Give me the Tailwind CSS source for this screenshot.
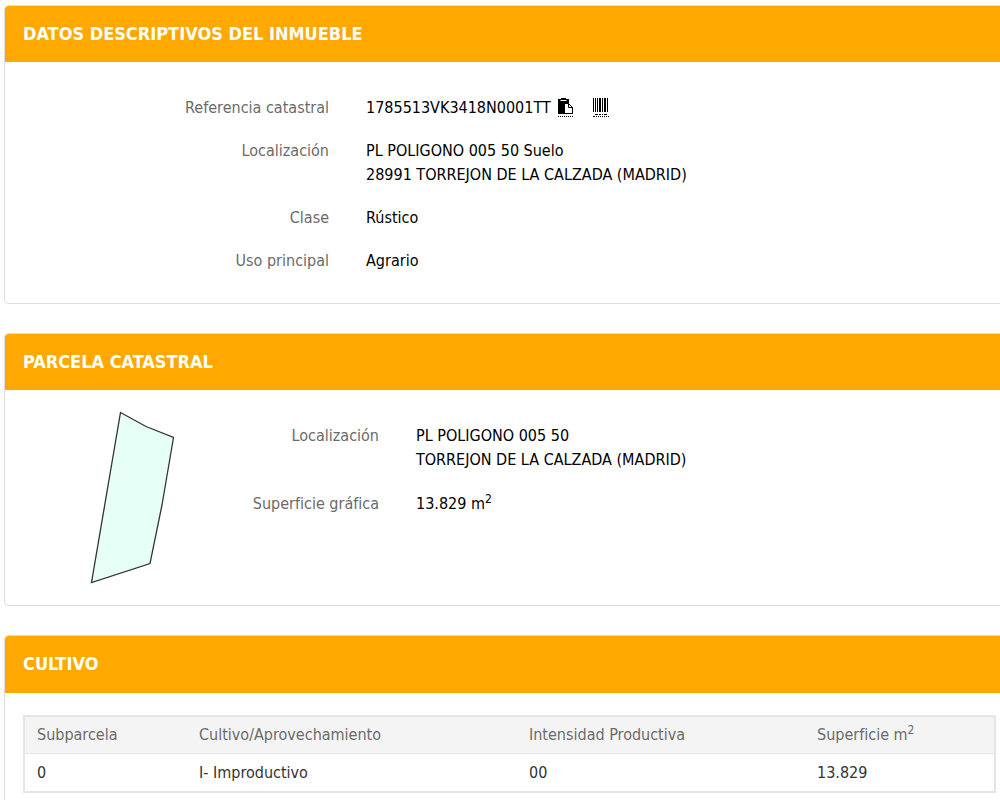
<!DOCTYPE html>
<html lang="es">
<head>
  <meta charset="UTF-8">
  <meta name="viewport" content="width=device-width, initial-scale=1.0">
  <title>Datos descriptivos del inmueble</title>
  <script src="https://cdn.jsdelivr.net/npm/@tailwindcss/browser@4"></script>
</head>
<body class="bg-white font-['DejaVu_Sans_Condensed','Noto_Sans',sans-serif] text-base leading-6 text-black">
  <main class="flex flex-col gap-[29px] pt-[5px] pl-1">

    <!-- Datos del inmueble -->
    <section class="border border-r-0 border-[#dddddd] rounded-l-[5px] overflow-hidden">
      <h2 class="bg-[#ffa800] text-white text-lg leading-6 font-bold px-[18px] py-4">DATOS DESCRIPTIVOS DEL INMUEBLE</h2>
      <dl class="grid grid-cols-[324px_1fr] gap-x-[37px] gap-y-[19px] pt-[34px] pb-[30px]">
        <dt class="text-right text-[#6b6b6b]">Referencia catastral</dt>
        <dd class="flex">
          <span>1785513VK3418N0001TT</span>
          <button type="button" aria-label="Copiar" class="ml-[7px] mt-px h-5 border-b border-dotted border-black">
            <svg class="w-[15px] h-[18px]" viewBox="0 0 15 18">
              <path d="M0 1h3V0h5v1h3v4H7v11H0z" fill="#000"/>
              <path d="M2.500 2.500h6" stroke="#fff"/>
              <path d="M6.500 5.500h4l4 4v6h-8z" fill="#fff" stroke="#000"/>
              <path d="M10.500 5.500v4h4" fill="none" stroke="#000"/>
            </svg>
          </button>
          <button type="button" aria-label="Código de barras" class="ml-5 mt-px h-5 border-b border-dotted border-black">
            <svg class="w-4 h-[18px]" viewBox="0 0 16 18">
              <path d="M0 0h1v14H0zM2 0h1v14H2zM4 0h1v14H4zM6 0h2v14H6zM9 0h1v14H9zM11 0h2v14h-2zM14 0h1v14h-1z" fill="#000"/>
              <path d="M2 16.500h3M6 16.500h2M9 16.500h1M11 16.500h3" stroke="#000"/>
            </svg>
          </button>
        </dd>
        <dt class="text-right text-[#6b6b6b]">Localización</dt>
        <dd>PL POLIGONO 005 50 Suelo<br>28991 TORREJON DE LA CALZADA (MADRID)</dd>
        <dt class="text-right text-[#6b6b6b]">Clase</dt>
        <dd>Rústico</dd>
        <dt class="text-right text-[#6b6b6b]">Uso principal</dt>
        <dd>Agrario</dd>
      </dl>
    </section>

    <!-- Parcela -->
    <section class="border border-r-0 border-[#dddddd] rounded-l-[5px] overflow-hidden">
      <h2 class="bg-[#ffa800] text-white text-lg leading-6 font-bold px-[18px] py-4">PARCELA CATASTRAL</h2>
      <div class="flex pt-5 pb-5">
        <svg class="w-[100px] h-[175px] ml-[76px] shrink-0" viewBox="0 0 100 175">
          <path d="M39.500 2.500L65 16.500L92.500 27.500L81 95L69 153.500L10.500 172.500Z" fill="#e6fff7" stroke="#333" stroke-width="1.300"/>
        </svg>
        <dl class="grid grow grid-cols-[198px_1fr] gap-x-[37px] gap-y-5 content-start pt-[14px]">
          <dt class="text-right text-[#6b6b6b]">Localización</dt>
          <dd>PL POLIGONO 005 50<br>TORREJON DE LA CALZADA (MADRID)</dd>
          <dt class="text-right text-[#6b6b6b]">Superficie gráfica</dt>
          <dd>13.829 m<sup class="text-xs">2</sup></dd>
        </dl>
      </div>
    </section>

    <!-- Cultivo -->
    <section class="border border-r-0 border-b-0 border-[#dddddd] rounded-tl-[5px] overflow-hidden">
      <h2 class="bg-[#ffa800] text-white text-lg leading-6 font-bold px-[18px] pt-4 pb-[17px]">CULTIVO</h2>
      <div class="pt-[22px] pl-[18px] pr-1 pb-2">
        <table class="w-full table-fixed border-separate border-spacing-0 border-2 border-[#e5e5e5] text-left">
          <thead class="bg-[#f4f4f4] text-[#6b6b6b]">
            <tr>
              <th class="w-[162px] h-[37px] pl-3 font-normal border-b border-[#e5e5e5]">Subparcela</th>
              <th class="w-[330px] pl-3 font-normal border-b border-[#e5e5e5]">Cultivo/Aprovechamiento</th>
              <th class="w-[288px] pl-3 font-normal border-b border-[#e5e5e5]">Intensidad Productiva</th>
              <th class="pl-3 font-normal border-b border-[#e5e5e5]">Superficie m<sup class="text-xs">2</sup></th>
            </tr>
          </thead>
          <tbody class="text-[#333333]">
            <tr>
              <td class="h-[37px] pl-3">0</td>
              <td class="pl-3">I- Improductivo</td>
              <td class="pl-3">00</td>
              <td class="pl-3">13.829</td>
            </tr>
          </tbody>
        </table>
      </div>
    </section>

  </main>
</body>
</html>
